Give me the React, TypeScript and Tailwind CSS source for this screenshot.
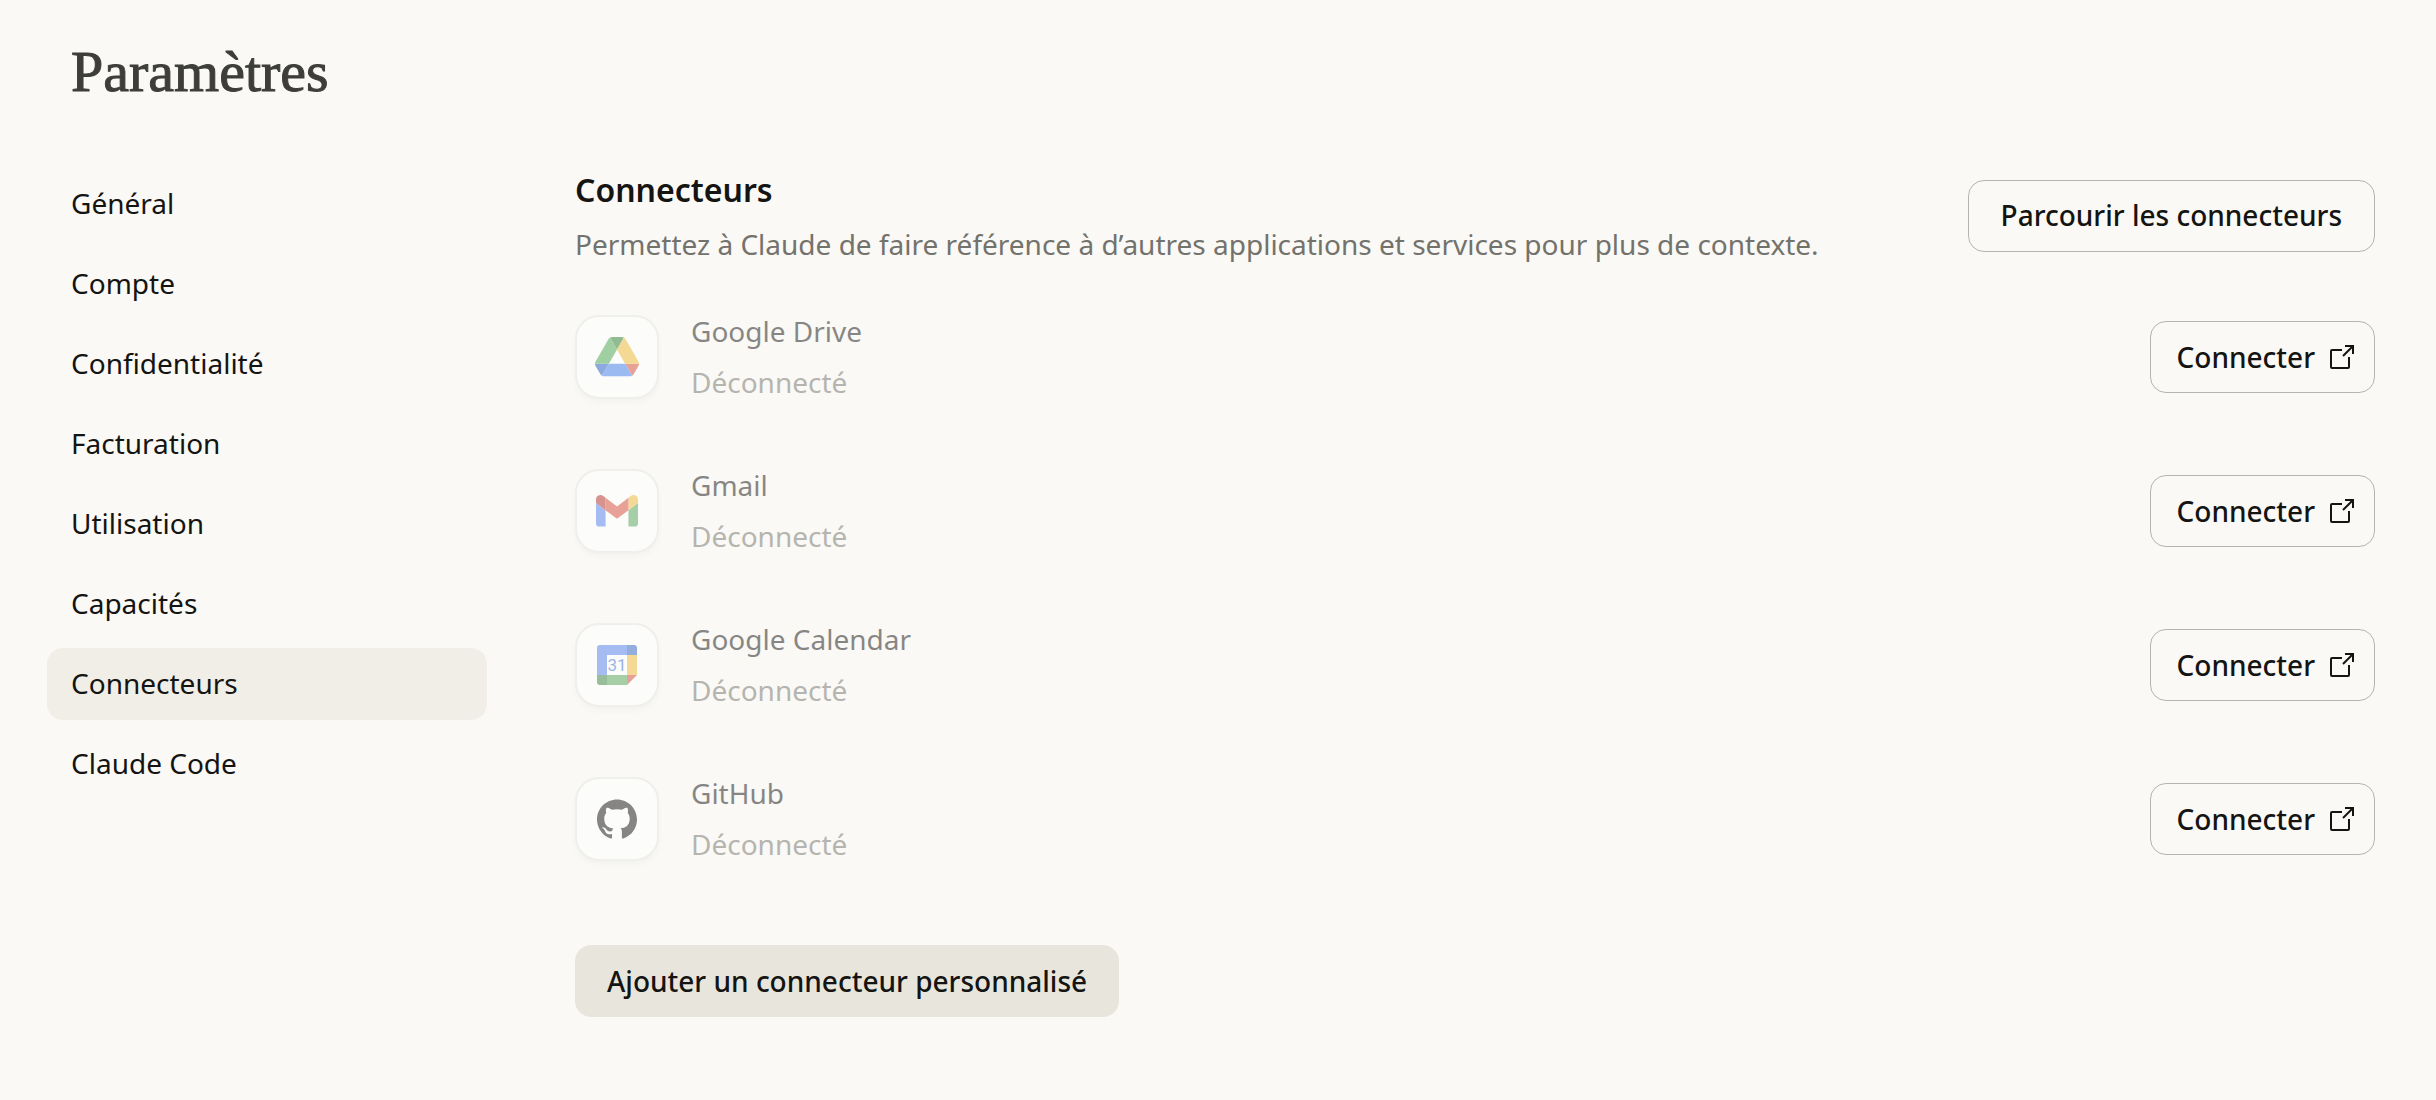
import React, { useState } from 'react';
import { SiGithub } from 'react-icons/si';

interface Connector {
  name: string;
  status: string;
  icon: React.ReactNode;
}

const sections = [
  'Général',
  'Compte',
  'Confidentialité',
  'Facturation',
  'Utilisation',
  'Capacités',
  'Connecteurs',
  'Claude Code'
];

const DriveIcon = () => (
  <svg className="w-11" viewBox="0 0 87.3 78" aria-hidden="true">
    <path d="m6.6 66.85 3.85 6.65c.8 1.4 1.95 2.5 3.3 3.3l13.75-23.8h-27.5c0 1.55.4 3.1 1.2 4.5z" fill="#235cc6" />
    <path d="m43.65 25-13.75-23.8c-1.35.8-2.5 1.9-3.3 3.3l-25.4 44a9.06 9.06 0 0 0-1.2 4.5h27.5z" fill="#49a652" />
    <path d="m73.55 76.8c1.35-.8 2.5-1.9 3.3-3.3l1.6-2.75 7.65-13.25c.8-1.4 1.2-2.95 1.2-4.5h-27.5z" fill="#d54c3a" />
    <path d="m43.65 25 13.75-23.8c-1.35-.8-2.9-1.2-4.5-1.2h-18.5c-1.6 0-3.15.45-4.5 1.2z" fill="#297e34" />
    <path d="m59.8 53h-32.3l-13.75 23.8c1.35.8 2.9 1.2 4.5 1.2h50.8c1.6 0 3.15-.45 4.5-1.2z" fill="#417cf0" />
    <path d="m73.4 26.5-12.7-22c-.8-1.4-1.95-2.5-3.3-3.3l-13.75 23.8 16.15 28h27.45c0-1.55-.4-3.1-1.2-4.5z" fill="#efba36" />
  </svg>
);

const GmailIcon = () => (
  <svg className="w-[42px]" viewBox="52 42 88 66" aria-hidden="true">
    <path fill="#5080ee" d="M58 108h14V74L52 59v43c0 3.32 2.69 6 6 6" />
    <path fill="#55a45b" d="M120 108h14c3.32 0 6-2.69 6-6V59l-20 15" />
    <path fill="#efba36" d="M120 48v26l20-15v-8c0-7.42-8.47-11.65-14.4-7.2" />
    <path fill="#d54c3a" d="M72 74V48l24 18 24-18v26L96 92" />
    <path fill="#b5302a" d="M52 51v8l20 15V48l-5.6-4.2c-5.94-4.45-14.4-.22-14.4 7.2" />
  </svg>
);

const CalendarIcon = () => (
  <svg className="w-10" viewBox="0 0 40 40" aria-hidden="true">
    <path d="M3 0h27v10H10v20H0V3a3 3 0 0 1 3-3z" fill="#5080ee" />
    <path d="M30 0h7a3 3 0 0 1 3 3v7H30z" fill="#2f63c4" />
    <path d="M30 10h10v20H30z" fill="#efba36" />
    <path d="M10 30h20v10H10z" fill="#55a45b" />
    <path d="M0 30h10v10H3a3 3 0 0 1-3-3z" fill="#3b8044" />
    <path d="M30 30h10L30 40z" fill="#d54c3a" />
    <path d="M10 10h20v20H10z" fill="#fff" />
    <text x="20" y="26" textAnchor="middle" fontSize="17" fontFamily="Roboto, sans-serif" fill="#3a70d8">
      31
    </text>
  </svg>
);

const ExternalIcon = () => (
  <svg
    className="size-[26px]"
    viewBox="0 0 26 26"
    fill="none"
    stroke="currentColor"
    strokeWidth="2"
    strokeLinecap="square"
    aria-hidden="true"
  >
    <path d="M12 6H3a1 1 0 0 0-1 1v16a1 1 0 0 0 1 1h16a1 1 0 0 0 1-1v-9" />
    <path d="M17 2h7v7" />
    <path d="M24 2 14 12" strokeLinecap="butt" />
  </svg>
);

const connectors: Connector[] = [
  { name: 'Google Drive', status: 'Déconnecté', icon: <DriveIcon /> },
  { name: 'Gmail', status: 'Déconnecté', icon: <GmailIcon /> },
  { name: 'Google Calendar', status: 'Déconnecté', icon: <CalendarIcon /> },
  { name: 'GitHub', status: 'Déconnecté', icon: <SiGithub className="size-10 text-[#141413]" /> }
];

const ConnectorRow: React.FC<{ connector: Connector }> = ({ connector }) => (
  <li className="flex items-center justify-between gap-8">
    <div className="flex items-center gap-8 opacity-50">
      <div className="flex size-[84px] shrink-0 items-center justify-center rounded-3xl border-2 border-[#e6e6e3] bg-white shadow-md shadow-black/4">
        {connector.icon}
      </div>
      <div className="leading-[51px]">
        <h3>{connector.name}</h3>
        <p className="text-[#73726c]">{connector.status}</p>
      </div>
    </div>
    <button
      type="button"
      className="flex h-18 shrink-0 items-center gap-3.5 rounded-2xl border border-[#b5b4ae] pr-[19px] pl-[26px] font-medium hover:bg-[#f0eee6]"
    >
      Connecter
      <ExternalIcon />
    </button>
  </li>
);

export default function App() {
  const [active, setActive] = useState('Connecteurs');

  return (
    <div className="min-h-screen bg-[#faf9f5] pt-10 pr-[61px] pb-20 pl-[47px] font-['Noto_Sans',sans-serif] text-[28px] leading-10 text-[#141413]">
      <h1 className="pl-6 font-['Liberation_Serif',serif] text-[58px] leading-16 text-[#3d3d3a] [-webkit-text-stroke:1px_#3d3d3a]">
        Paramètres
      </h1>

      <div className="mt-16 flex items-start gap-22">
        <nav className="flex w-[440px] shrink-0 flex-col gap-2" aria-label="Paramètres">
          {sections.map((section) => (
            <a
              key={section}
              href="#"
              aria-current={section === active ? 'page' : undefined}
              className={`flex h-18 items-center rounded-2xl px-6 pb-0.5 ${
                section === active ? 'bg-[#f0eee6]' : 'hover:bg-[#f5f4ed]'
              }`}
              onClick={(e) => {
                e.preventDefault();
                setActive(section);
              }}
            >
              {section}
            </a>
          ))}
        </nav>

        <main className="min-w-0 flex-1 pt-0.5">
          <header className="flex items-start justify-between gap-8">
            <div className="flex flex-col gap-3.5">
              <h2 className="text-[32px] font-semibold">Connecteurs</h2>
              <p className="text-[#73726c]">
                Permettez à Claude de faire référence à d’autres applications et services pour plus de contexte.
              </p>
            </div>
            <button
              type="button"
              className="mt-2.5 h-18 shrink-0 rounded-2xl border border-[#b5b4ae] px-8 pb-0.5 font-medium hover:bg-[#f0eee6]"
            >
              Parcourir les connecteurs
            </button>
          </header>

          <ul className="mt-[42px] flex flex-col gap-[52px]">
            {connectors.map((connector) => (
              <ConnectorRow key={connector.name} connector={connector} />
            ))}
          </ul>

          <button type="button" className="mt-[75px] h-18 rounded-2xl bg-[#e8e6dc] px-8 font-medium hover:bg-[#dedcd1]">
            Ajouter un connecteur personnalisé
          </button>
        </main>
      </div>
    </div>
  );
}
